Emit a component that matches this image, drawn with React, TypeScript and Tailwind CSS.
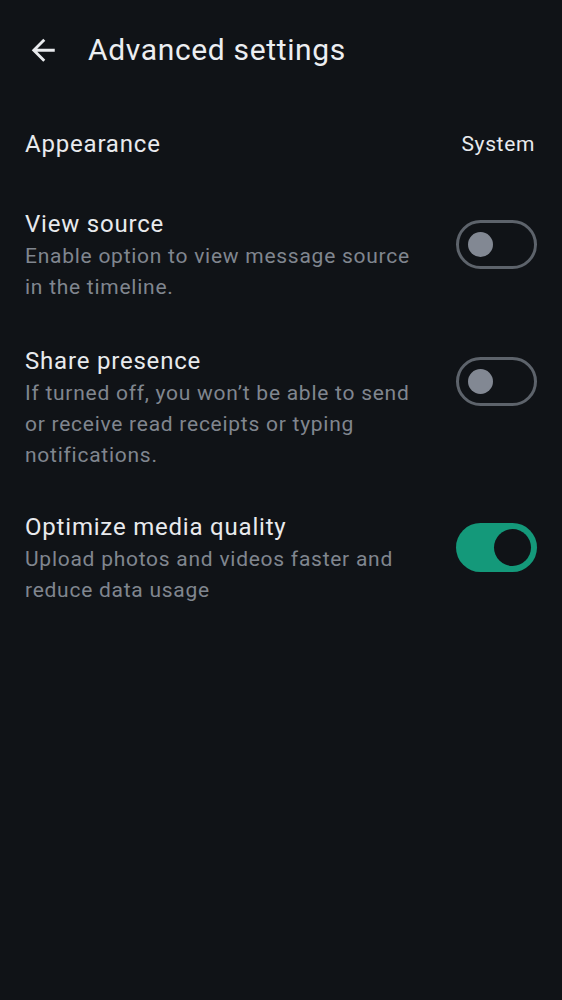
import React from "react";

function Toggle({ on }: { on: boolean }) {
  if (on) {
    return (
      <div className="flex h-[49px] w-[81px] shrink-0 items-center justify-end rounded-full bg-[#14997a] pr-[6px]">
        <div className="h-[37px] w-[37px] rounded-full bg-[#101317]" />
      </div>
    );
  }
  return (
    <div className="flex h-[49px] w-[81px] shrink-0 items-center rounded-full border-[3px] border-[#5d636b] pl-[9px]">
      <div className="h-[25px] w-[25px] rounded-full bg-[#828893]" />
    </div>
  );
}

function Row({ title, desc, on, mt }: { title: string; desc: string; on: boolean; mt: string }) {
  return (
    <div className={`flex items-start pl-[25px] pr-[25px] ${mt}`}>
      <div className="flex-1 pr-[34px]">
        <div className="text-[24px] leading-[32px] tracking-[0.8px] text-[#e8eaed]">{title}</div>
        <div className="pt-[1px] text-[21px] leading-[31px] tracking-[0.74px] text-[#80868f]">{desc}</div>
      </div>
      <div className="mt-[12px]">
        <Toggle on={on} />
      </div>
    </div>
  );
}

export default function App() {
  return (
    <div
      className="min-h-screen w-full bg-[#101317] text-[#e8eaed]"
      style={{ fontFamily: "Roboto, 'Noto Sans', sans-serif" }}
    >
      <div className="flex h-[100px] items-center pl-[26px]">
        <svg width="34.5" height="34.5" viewBox="0 0 24 24" fill="#e8eaed">
          <path d="M20 11H7.83l5.59-5.59L12 4l-8 8 8 8 1.41-1.41L7.83 13H20v-2z" />
        </svg>
        <div className="ml-[27.5px] text-[30px] leading-[36px] tracking-[0.65px] text-[#eceef1]">Advanced settings</div>
      </div>
      <div className="mt-[28px] flex items-center justify-between pl-[25px] pr-[27px]">
        <div className="text-[24px] leading-[32px] tracking-[0.8px]">Appearance</div>
        <div className="text-[21px] leading-[32px] tracking-[0.65px]">System</div>
      </div>
      <Row
        mt="mt-[48px]"
        title="View source"
        desc="Enable option to view message source in the timeline."
        on={false}
      />
      <Row
        mt="mt-[42px]"
        title="Share presence"
        desc="If turned off, you won’t be able to send or receive read receipts or typing notifications."
        on={false}
      />
      <Row
        mt="mt-[40px]"
        title="Optimize media quality"
        desc="Upload photos and videos faster and reduce data usage"
        on={true}
      />
    </div>
  );
}
